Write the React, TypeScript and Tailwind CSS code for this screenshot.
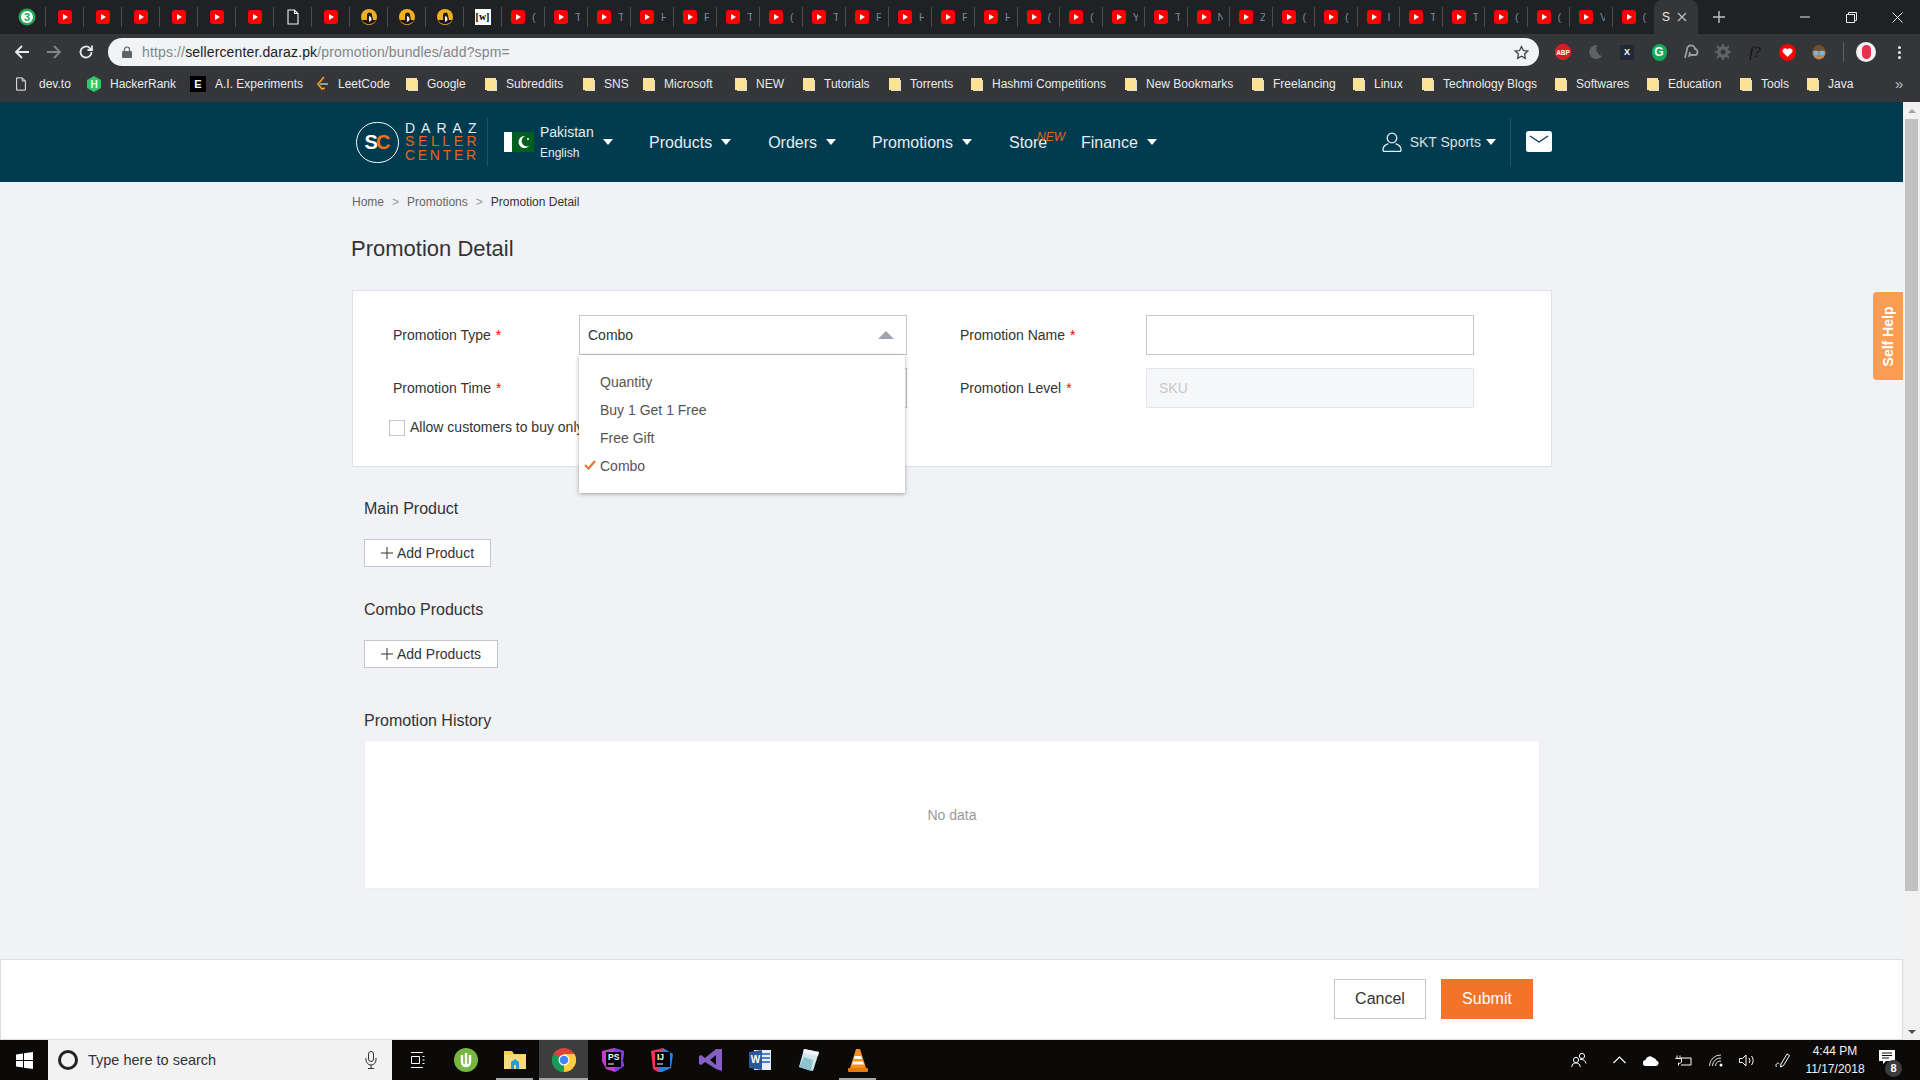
import React from 'react';

const Yt = () => (
  <svg width="14" height="14" viewBox="0 0 14 14" className="shrink-0">
    <rect width="14" height="14" rx="3" fill="#f00" />
    <path d="M5 4l5 3-5 3z" fill="#fff" />
  </svg>
);

const Doc = ({ size = 14 }: { size?: number }) => (
  <svg width={size} height={size + 2} viewBox="0 0 12 16" fill="none" stroke="#f1f3f4" strokeWidth="1.1" className="shrink-0">
    <path d="M1 1h6.5L11 4.5V15H1z" />
    <path d="M7.5 1v3.5H11" />
  </svg>
);

const Bird = () => (
  <svg width="16" height="16" viewBox="0 0 16 16" className="shrink-0">
    <circle cx="8" cy="8" r="8" fill="#f2b01e" />
    <path d="M1 11h14a8 8 0 0 1-14 0z" fill="#111" />
    <path d="M6 14V6a2.5 2.5 0 0 1 5 0l1 5-2 3z" fill="#222" />
    <path d="M8 13V7l2 1 .6 3z" fill="#fff" />
  </svg>
);

const Whats = () => (
  <svg width="18" height="20" viewBox="0 0 18 20" className="shrink-0">
    <circle cx="9" cy="10" r="8.5" fill="#1fa855" />
    <circle cx="9" cy="10" r="6" fill="#fff" />
    <text x="9" y="14" textAnchor="middle" fontSize="11" fontWeight="700" fill="#1fa855" fontFamily="Liberation Sans, sans-serif">3</text>
  </svg>
);

const W = () => (
  <div className="w-[16px] h-[16px] bg-white shrink-0 flex items-center justify-center text-[10px] leading-none text-black font-bold font-['Liberation_Serif',serif]">[w]</div>
);

const firstTabs: React.ReactNode[] = [<Whats />, <Yt />, <Yt />, <Yt />, <Yt />, <Yt />, <Yt />, <Doc />, <Yt />, <Bird />, <Bird />, <Bird />, <W />];
const lettersA = ['(', 'T', 'T', 'H', 'F', 'T', '(', 'T', 'F', 'H', 'F'];
const lettersB = ['H', '(', '(', 'Y', 'T', 'N', 'Z', '(', '(', 'I', 'T', 'T', '(', '(', 'V', '('];

const LetterTab = ({ letter, wide }: { letter: string; wide?: boolean }) => (
  <div className={`${wide ? 'w-[43px]' : 'w-[42.5px]'} h-[20px] shrink-0 pl-[9px] flex items-center gap-[7px] border-r border-[#4a4c50] overflow-hidden`}>
    <Yt />
    <span className="text-[11px] text-[#6f8a9c] w-[5px] overflow-hidden">{letter}</span>
  </div>
);

const TabStrip = () => (
  <div className="h-[34px] bg-[#202124] flex items-center pl-[8px] shrink-0">
    {firstTabs.map((icon, i) => (
      <div key={i} className="w-[38px] h-[20px] shrink-0 flex items-center justify-center border-r border-[#4a4c50]">
        {icon}
      </div>
    ))}
    {lettersA.map((l, i) => (
      <LetterTab key={i} letter={l} wide />
    ))}
    {lettersB.map((l, i) => (
      <LetterTab key={i} letter={l} />
    ))}
    <div className="w-[44px] h-[34px] shrink-0 -ml-px bg-[#35363a] rounded-t-[8px] flex items-center pl-[8px] text-[12px] text-[#e8eaed]">
      <span>S</span>
      <svg width="10" height="10" viewBox="0 0 10 10" className="ml-[7px]" stroke="#bdc1c6" strokeWidth="1.2">
        <path d="M1 1l8 8M9 1l-8 8" />
      </svg>
    </div>
    <svg width="14" height="14" viewBox="0 0 14 14" className="ml-[14px]" stroke="#bdc1c6" strokeWidth="1.4">
      <path d="M7 1v12M1 7h12" />
    </svg>
    <div className="ml-auto flex text-white">
      <div className="w-[46px] h-[34px] flex items-center justify-center">
        <svg width="10" height="10" viewBox="0 0 10 10" stroke="#e8eaed"><path d="M0 5h10" /></svg>
      </div>
      <div className="w-[46px] h-[34px] flex items-center justify-center">
        <svg width="11" height="11" viewBox="0 0 11 11" fill="none" stroke="#e8eaed"><path d="M.5 2.5h8v8h-8zM2.5 2.5v-2h8v8h-2" /></svg>
      </div>
      <div className="w-[46px] h-[34px] flex items-center justify-center">
        <svg width="11" height="11" viewBox="0 0 11 11" stroke="#e8eaed"><path d="M.5.5l10 10M10.5.5l-10 10" /></svg>
      </div>
    </div>
  </div>
);

const ToolIcon = ({ children }: { children: React.ReactNode }) => (
  <div className="w-[32px] h-[28px] flex items-center justify-center shrink-0">{children}</div>
);

const extIcons: React.ReactNode[] = [
  <svg width="16" height="16" viewBox="0 0 16 16"><path d="M5 0h6l5 5v6l-5 5H5l-5-5V5z" fill="#d21f26" /><text x="8" y="10.5" textAnchor="middle" fontSize="6.5" fontWeight="700" fill="#fff" fontFamily="Liberation Sans, sans-serif">ABP</text></svg>,
  <svg width="16" height="16" viewBox="0 0 16 16"><path d="M10 1a7 7 0 1 0 5 11A8 8 0 0 1 10 1z" fill="#5f6368" /></svg>,
  <div className="w-[14px] h-[15px] bg-[#1f2a36] text-[9px] leading-[15px] text-center text-white font-bold">X</div>,
  <div className="w-[15px] h-[17px] rounded-full bg-[#14a85a] text-[12px] leading-[17px] text-center font-bold"><span className="text-white">G</span></div>,
  <svg width="16" height="16" viewBox="0 0 16 16" fill="none" stroke="#9aa0a6" strokeWidth="1.8"><path d="M2 14l2-8a4 4 0 0 1 8-1 3 3 0 0 1-1 6H7M7 8l-1 5" /></svg>,
  <svg width="16" height="16" viewBox="0 0 16 16"><circle cx="8" cy="8" r="6" fill="#5f6368" /><circle cx="8" cy="8" r="2.5" fill="#35363a" /><path d="M8 0v3M8 13v3M0 8h3M13 8h3M2 2l2 2M12 12l2 2M14 2l-2 2M4 12l-2 2" stroke="#5f6368" strokeWidth="2" /></svg>,
  <span className="text-[15px] italic text-[#111] font-['Liberation_Serif',serif]">f?</span>,
  <svg width="17" height="17" viewBox="0 0 17 17"><circle cx="8.5" cy="8.5" r="8.5" fill="#f00" /><path d="M8.5 13L4 8.5a2.5 2.5 0 0 1 4.5-3 2.5 2.5 0 0 1 4.5 3z" fill="#fff" /></svg>,
  <svg width="16" height="17" viewBox="0 0 16 17"><circle cx="8" cy="9" r="6.5" fill="#b98552" /><path d="M2 7a6 6 0 0 1 12 0z" fill="#7a4f28" /><circle cx="5" cy="9" r="2.4" fill="#6fb8e8" /><circle cx="11" cy="9" r="2.4" fill="#6fb8e8" /></svg>,
];

const ToolBar = () => (
  <div className="h-[32px] bg-[#35363a] flex items-start pt-[4px] pl-[6px] shrink-0">
    <ToolIcon>
      <svg width="16" height="16" viewBox="0 0 16 16" fill="none" stroke="#e8eaed" strokeWidth="1.8"><path d="M15 8H2M8 2L2 8l6 6" /></svg>
    </ToolIcon>
    <ToolIcon>
      <svg width="16" height="16" viewBox="0 0 16 16" fill="none" stroke="#80868b" strokeWidth="1.8"><path d="M1 8h13M8 2l6 6-6 6" /></svg>
    </ToolIcon>
    <ToolIcon>
      <svg width="16" height="16" viewBox="0 0 16 16" fill="none" stroke="#e8eaed" strokeWidth="1.8"><path d="M13.5 8a5.5 5.5 0 1 1-1.6-3.9L14 6M14 1.5V6H9.5" /></svg>
    </ToolIcon>
    <div className="ml-[6px] w-[1431px] h-[28px] rounded-full bg-[#f1f3f4] flex items-center pl-[14px] pr-[10px] shrink-0">
      <svg width="10" height="12" viewBox="0 0 10 12" className="shrink-0">
        <path d="M2.5 5V3.5a2.5 2.5 0 0 1 5 0V5" fill="none" stroke="#5f6368" strokeWidth="1.2" />
        <rect y="5" width="10" height="7" rx="1" fill="#5f6368" />
      </svg>
      <span className="ml-[10px] text-[14px] whitespace-nowrap text-[#80868b] tracking-[0.14px]">
        https://<span className="text-[#202124]">sellercenter.daraz.pk</span>/promotion/bundles/add?spm=
      </span>
      <svg width="15" height="15" viewBox="0 0 24 24" fill="none" stroke="#3c4043" strokeWidth="2" className="ml-auto">
        <path d="M12 2.5l3 6.3 6.9.9-5 4.8 1.2 6.9-6.1-3.3-6.1 3.3 1.2-6.9-5-4.8 6.9-.9z" />
      </svg>
    </div>
    <div className="ml-[8px] flex">
      {extIcons.map((icon, i) => (
        <ToolIcon key={i}>{icon}</ToolIcon>
      ))}
    </div>
    <div className="ml-[8px] mt-[4px] w-px h-[20px] bg-[#5f6368]" />
    <div className="ml-[6px] w-[32px] h-[28px] flex items-center justify-center shrink-0">
      <div className="w-[20px] h-[20px] rounded-full bg-[#f1f3f4] flex items-center justify-center">
        <div className="w-[9px] h-[14px] rounded-full bg-[#e8304f]" />
      </div>
    </div>
    <div className="ml-px w-[32px] h-[28px] flex flex-col items-center justify-center gap-[2px]">
      <i className="w-[3px] h-[3px] rounded-full bg-[#e8eaed]" />
      <i className="w-[3px] h-[3px] rounded-full bg-[#e8eaed]" />
      <i className="w-[3px] h-[3px] rounded-full bg-[#e8eaed]" />
    </div>
  </div>
);

const Folder = () => (
  <svg width="12" height="13" viewBox="0 0 12 13" className="shrink-0">
    <path d="M0 0h11v12H0z" fill="#fde293" />
    <path d="M11 2h1v11H2v-1h9z" fill="#dadce0" />
  </svg>
);

const bookmarks: { label: string; cls: string; icon?: React.ReactNode }[] = [
  { label: 'HackerRank', cls: 'w-[103px]', icon: <svg width="14" height="16" viewBox="0 0 14 16" className="shrink-0"><path d="M7 0l7 4v8l-7 4-7-4V4z" fill="#2ec866" /><text x="7" y="12" textAnchor="middle" fontSize="10" fontWeight="700" fill="#fff" fontFamily="Liberation Sans, sans-serif">H</text></svg> },
  { label: 'A.I. Experiments', cls: 'w-[125px]', icon: <div className="w-[16px] h-[16px] bg-black text-white text-[11px] leading-[16px] text-center font-bold shrink-0">E</div> },
  { label: 'LeetCode', cls: 'w-[91px]', icon: <svg width="14" height="16" viewBox="0 0 14 16" fill="none" className="shrink-0"><path d="M9 1L3 8l4 5 3-1" stroke="#f89f1b" strokeWidth="1.6" /><path d="M5 8h8" stroke="#b3b3b3" strokeWidth="1.6" /></svg> },
  { label: 'Google', cls: 'w-[79px]' },
  { label: 'Subreddits', cls: 'w-[98px]' },
  { label: 'SNS', cls: 'w-[60px]' },
  { label: 'Microsoft', cls: 'w-[92px]' },
  { label: 'NEW', cls: 'w-[68px]' },
  { label: 'Tutorials', cls: 'w-[86px]' },
  { label: 'Torrents', cls: 'w-[82px]' },
  { label: 'Hashmi Competitions', cls: 'w-[154px]' },
  { label: 'New Bookmarks', cls: 'w-[127px]' },
  { label: 'Freelancing', cls: 'w-[101px]' },
  { label: 'Linux', cls: 'w-[69px]' },
  { label: 'Technology Blogs', cls: 'w-[133px]' },
  { label: 'Softwares', cls: 'w-[92px]' },
  { label: 'Education', cls: 'w-[93px]' },
  { label: 'Tools', cls: 'w-[67px]' },
  { label: 'Java', cls: 'w-[66px]' },
];

const BookmarkBar = () => (
  <div className="h-[36px] bg-[#35363a] flex items-center pl-[15px] shrink-0 text-[12px] text-[#e8eaed] font-['Liberation_Sans',sans-serif]">
    <div className="w-[72px] flex items-center gap-[12px] shrink-0">
      <Doc size={12} />
      <span>dev.to</span>
    </div>
    {bookmarks.map((b) => (
      <div key={b.label} className={`${b.cls} flex items-center gap-[9px] shrink-0 overflow-hidden whitespace-nowrap`}>
        {b.icon ?? <Folder />}
        <span>{b.label}</span>
      </div>
    ))}
    <span className="ml-[22px] text-[15px] text-[#bdc1c6]">»</span>
  </div>
);

const Caret = ({ className = 'border-t-white' }: { className?: string }) => (
  <i className={`inline-block w-0 h-0 border-x-[5px] border-x-transparent border-t-[6px] ${className}`} />
);

const NavItem = ({ label }: { label: string }) => (
  <div className="flex items-center gap-[9px] text-[16px] text-[#e5edf0]">
    <span className="mt-[1px]">{label}</span>
    <Caret />
  </div>
);

const TopNav = () => (
  <div className="h-[80px] bg-[#003b4f] flex items-center pl-[356px] pr-[351px] shrink-0">
    <div className="w-[120px] flex items-center shrink-0">
      <div className="w-[43px] h-[41px] rounded-full border-[1.5px] border-white flex items-center justify-center text-[20px] font-bold leading-none shrink-0">
        <span className="text-white">S</span>
        <span className="text-[#f0701f] -ml-[2px]">C</span>
      </div>
      <div className="ml-[6px] flex flex-col text-[14px] leading-[13.5px] whitespace-nowrap">
        <span className="text-[#e5edf0] tracking-[6px]">DARAZ</span>
        <span className="text-[#e8651a] tracking-[3.6px]">SELLER</span>
        <span className="text-[#e8651a] tracking-[2.7px]">CENTER</span>
      </div>
    </div>
    <div className="ml-[11px] w-px h-[48px] bg-[#1f5567]" />
    <svg width="30" height="20" viewBox="0 0 30 20" className="ml-[16px] shrink-0">
      <rect width="30" height="20" fill="#01601f" />
      <rect width="8" height="20" fill="#fff" />
      <path d="M21 4a6 6 0 1 0 4 10 5 5 0 1 1-4-10z" fill="#fff" />
      <circle cx="24" cy="7" r="1" fill="#fff" />
    </svg>
    <div className="ml-[6px] w-[63px] flex flex-col shrink-0 text-[#e5edf0]">
      <span className="text-[14px] leading-[21px]">Pakistan</span>
      <span className="text-[12px] leading-[20px]">English</span>
    </div>
    <Caret />
    <div className="ml-[36px] flex items-center gap-[36px]">
      <NavItem label="Products" />
      <div className="ml-[1px]"><NavItem label="Orders" /></div>
      <NavItem label="Promotions" />
      <div className="relative mt-[1px] ml-[1px] text-[16px] text-[#e5edf0] w-[36px]">
        Store
        <span className="absolute left-[28px] top-0 text-[12px] italic text-[#e8651a] leading-none">NEW</span>
      </div>
      <NavItem label="Finance" />
    </div>
    <div className="ml-auto flex items-center">
      <svg width="20" height="20" viewBox="0 0 20 20" fill="none" stroke="#e5edf0" strokeWidth="1.3" className="-ml-[1px]">
        <circle cx="10" cy="6" r="4.8" />
        <path d="M1 19.3v-1.6c0-3 3-5.2 5.5-6M19 19.3v-1.6c0-3-3-5.2-5.5-6M1 19.4h18" />
      </svg>
      <span className="ml-[8px] text-[14px] text-[#d6e0e4]">SKT Sports</span>
      <span className="ml-[5px] flex">
        <Caret />
      </span>
      <div className="ml-[14px] w-px h-[48px] bg-[#1f5567]" />
      <svg width="26" height="21" viewBox="0 0 26 21" className="ml-[15px] -mt-[1px]">
        <rect width="26" height="21" rx="2.5" fill="#fff" />
        <path d="M4 5l9 6 9-6" fill="none" stroke="#003b4f" strokeWidth="1.3" />
      </svg>
    </div>
  </div>
);

const Star = () => <span className="text-[#ff0000] ml-[5px]">*</span>;

const FormCard = () => (
  <div className="h-[177px] bg-white border border-[#dfe1e8] pt-[24px] text-[14px] text-[#333]">
    <div className="flex items-center pl-[40px]">
      <div className="w-[186px] shrink-0">Promotion Type<Star /></div>
      <div className="w-[328px] h-[40px] border border-[#c4c6cf] flex items-center px-[8px] shrink-0">
        Combo
        <i className="ml-auto mr-[4px] w-0 h-0 border-x-[8px] border-x-transparent border-b-[8px] border-b-[#a0a3b0]" />
      </div>
      <div className="ml-[53px] w-[186px] shrink-0">Promotion Name<Star /></div>
      <div className="w-[328px] h-[40px] border border-[#c4c6cf] shrink-0" />
    </div>
    <div className="mt-[13px] flex items-center pl-[40px]">
      <div className="w-[186px] shrink-0">Promotion Time<Star /></div>
      <div className="w-[328px] h-[40px] border border-[#c4c6cf] shrink-0" />
      <div className="ml-[53px] w-[186px] shrink-0">Promotion Level<Star /></div>
      <div className="w-[328px] h-[40px] border border-[#e3e5ea] bg-[#f6f7f9] flex items-center px-[12px] text-[#c8c8c8] shrink-0">SKU</div>
    </div>
    <div className="mt-[9px] ml-[36px] w-[190px] overflow-hidden flex items-center gap-[5px] whitespace-nowrap">
      <div className="w-[16px] h-[16px] border border-[#c4c6cf] bg-white shrink-0" />
      <span>Allow customers to buy only once</span>
    </div>
  </div>
);

const TypeMenu = () => (
  <div className="absolute left-[227px] top-[65px] w-[326px] h-[138px] bg-white shadow-[0_1px_4px_rgba(0,0,0,0.35)] py-[13px] text-[14px] text-[#555]">
    {['Quantity', 'Buy 1 Get 1 Free', 'Free Gift', 'Combo'].map((item) => (
      <div key={item} className="relative h-[28px] leading-[28px] pl-[21px]">
        {item === 'Combo' && (
          <svg width="12" height="10" viewBox="0 0 12 10" fill="none" stroke="#f37329" strokeWidth="2.2" className="absolute left-[5px] top-[8px]">
            <path d="M1 5l3.5 3.5L11 1" />
          </svg>
        )}
        {item}
      </div>
    ))}
  </div>
);

const AddButton = ({ label, cls }: { label: string; cls: string }) => (
  <div className={`${cls} h-[28px] bg-white border border-[#c4c6cf] flex items-center pl-[16px] gap-[4px] text-[14px] text-[#333]`}>
    <svg width="12" height="12" viewBox="0 0 12 12" stroke="#333" strokeWidth="1"><path d="M6 0v12M0 6h12" /></svg>
    {label}
  </div>
);

const Content = () => (
  <div className="relative flex-1 bg-[#f0f2f6] pl-[352px] pt-[12px] overflow-hidden">
    <div className="w-[1200px] relative">
      <div className="h-[16px] flex items-center text-[12px] text-[#666]">
        <span>Home</span>
        <span className="ml-[8px] text-[#999]">&gt;</span>
        <span className="ml-[8px]">Promotions</span>
        <span className="ml-[8px] text-[#999]">&gt;</span>
        <span className="ml-[8px] text-[#333]">Promotion Detail</span>
      </div>
      <h1 className="mt-[26px] -ml-[1px] text-[22px] leading-[26px] font-normal text-[#333]">Promotion Detail</h1>
      <div className="relative mt-[28px]">
        <FormCard />
        <TypeMenu />
      </div>
      <div className="pl-[12px] text-[16px] leading-[20px] text-[#333]">
        <div className="mt-[32px]">Main Product</div>
        <AddButton label="Add Product" cls="mt-[20px] w-[127px]" />
        <div className="mt-[33px]">Combo Products</div>
        <AddButton label="Add Products" cls="mt-[20px] w-[134px]" />
        <div className="mt-[43px]">Promotion History</div>
        <div className="mt-[9px] w-[1176px] h-[149px] bg-white border border-[#eceef2] flex items-center justify-center text-[14px] text-[#999]">
          No data
        </div>
      </div>
    </div>
    <div className="absolute right-0 top-[110px] w-[30px] h-[88px] pl-[2px] bg-[#fb9d52] rounded-l-[4px] flex items-center justify-center">
      <span className="-rotate-90 whitespace-nowrap text-[14px] font-bold text-white">Self Help</span>
    </div>
  </div>
);

const Footer = () => (
  <div className="h-[81px] bg-white border border-[#dadde5] pb-[2px] flex items-center justify-end pr-[369px] gap-[15px] shrink-0 text-[16px]">
    <div className="w-[92px] h-[40px] border border-[#c4c6cf] flex items-center justify-center text-[#333]">Cancel</div>
    <div className="w-[92px] h-[40px] bg-[#f37329] flex items-center justify-center text-white">Submit</div>
  </div>
);

const ScrollBar = () => (
  <div className="w-[17px] bg-[#f1f1f1] flex flex-col items-center shrink-0">
    <div className="h-[17px] flex items-center justify-center shrink-0">
      <i className="w-0 h-0 border-x-[4px] border-x-transparent border-b-[4px] border-b-[#a3a3a3]" />
    </div>
    <div className="w-[13px] h-[772px] bg-[#c1c1c1] shrink-0" />
    <div className="mt-auto h-[17px] flex items-center justify-center shrink-0">
      <i className="w-0 h-0 border-x-[4px] border-x-transparent border-t-[4px] border-t-[#505050]" />
    </div>
  </div>
);

const Task = ({ children, cls = '' }: { children: React.ReactNode; cls?: string }) => (
  <div className={`w-[49px] h-[40px] flex items-center justify-center shrink-0 relative ${cls}`}>{children}</div>
);

const Running = () => <div className="absolute bottom-0 left-[6px] right-[6px] h-[2px] bg-[#a8a8a8]" />;

const TaskBar = () => (
  <div className="h-[40px] bg-[#0c0a09] flex items-center shrink-0 font-['Liberation_Sans',sans-serif]">
    <div className="w-[48px] flex items-center justify-center shrink-0">
      <svg width="17" height="17" viewBox="0 0 17 17" fill="#fff"><path d="M0 2.4l7-1v6.6H0zM8 1.200L17 0v8H8zM0 9h7v6.600l-7-1zM8 9h9v8l-9-1.200z" /></svg>
    </div>
    <div className="w-[344px] h-[40px] bg-[#f2f2f2] flex items-center pl-[10px] pr-[15px] shrink-0">
      <div className="w-[20px] h-[20px] rounded-full border-[3px] border-[#222]" />
      <span className="ml-[10px] mt-[2px] text-[14.5px] text-[#333]">Type here to search</span>
      <svg width="12" height="18" viewBox="0 0 12 18" fill="none" stroke="#333" className="ml-auto">
        <rect x="3.5" y=".5" width="5" height="10" rx="2.5" />
        <path d="M1 7v2a5 5 0 0 0 10 0V7M6 14v3M3 17.5h6" />
      </svg>
    </div>
    <Task>
      <svg width="16" height="16" viewBox="0 0 16 16" fill="none" stroke="#fff"><path d="M2 .5h12M2 15.500h12M2.500 4.500h8v7h-8zM13.500 4.500h2M13.500 11.500h2M13.500 8h2" /></svg>
    </Task>
    <Task>
      <svg width="24" height="24" viewBox="0 0 24 24"><circle cx="12" cy="12" r="12" fill="#76b83f" /><path d="M8 7v7a4 4 0 0 0 8 0V7M12 5v12" fill="none" stroke="#fff" strokeWidth="2.4" /></svg>
    </Task>
    <Task>
      <svg width="22" height="22" viewBox="0 0 22 22"><path d="M0 2h8l2 3h12v15H0z" fill="#f6cd5b" /><path d="M0 6h22v14H0z" fill="#fbdc7c" /><path d="M7 20v-7l4-3 4 3v7z" fill="#2a9bd8" /><path d="M10 20v-4h2v4z" fill="#fbdc7c" /></svg>
      <Running />
    </Task>
    <Task cls="bg-[#3d3d3d]">
      <svg width="24" height="24" viewBox="0 0 24 24">
        <circle cx="12" cy="12" r="12" fill="#db4437" />
        <path d="M12 12L1.600 18A12 12 0 0 1 1.600 6z" fill="#0f9d58" />
        <path d="M12 12L1.600 18A12 12 0 0 0 12 24z" fill="#0f9d58" />
        <path d="M12 12l-0 12A12 12 0 0 0 22.400 6H12z" fill="#ffcd40" />
        <circle cx="12" cy="12" r="5.500" fill="#fff" />
        <circle cx="12" cy="12" r="4.300" fill="#4285f4" />
      </svg>
      <div className="absolute bottom-0 left-0 right-0 h-[2px] bg-[#a8a8a8]" />
    </Task>
    <Task>
      <svg width="24" height="24" viewBox="0 0 24 24"><path d="M1 3l12-3 10 3-1 10 1 5-9 6-9-3-4-8z" fill="#c23fc9" /><path d="M13 0l10 3-1 10 1 5-9 6z" fill="#7a3fe0" /><rect x="5" y="4" width="15" height="15" fill="#000" /><text x="7" y="12" fontSize="8.500" fontWeight="700" fill="#fff" fontFamily="Liberation Sans, sans-serif">PS</text><path d="M7 16h6" stroke="#fff" /></svg>
    </Task>
    <Task>
      <svg width="24" height="24" viewBox="0 0 24 24"><path d="M1 3l12-3 3 12-8 12-5-3z" fill="#f0345c" /><path d="M13 0l10 6-2 14-9 4-4 0z" fill="#2f7fe0" /><rect x="5" y="4" width="15" height="15" fill="#000" /><text x="7" y="12" fontSize="8.500" fontWeight="700" fill="#fff" fontFamily="Liberation Sans, sans-serif">IJ</text><path d="M7 16h6" stroke="#fff" /></svg>
    </Task>
    <Task>
      <svg width="24" height="24" viewBox="0 0 24 24"><path d="M23 1v22l-6-2-11-7-4 3-2-1V8l2-1 4 3 11-9zM17 7l-6 5 6 5z" fill="#865fc5" fillRule="evenodd" /></svg>
    </Task>
    <Task>
      <svg width="24" height="24" viewBox="0 0 24 24"><path d="M6 2h17v20H6z" fill="#e8eef7" /><path d="M14 5h8v2h-8zM14 9h8v2h-8zM14 13h8v2h-8z" fill="#4a84d0" /><path d="M1 4l13-2v20L1 20z" fill="#2b579a" /><text x="7.500" y="15" textAnchor="middle" fontSize="10" fontWeight="700" fill="#fff" fontFamily="Liberation Sans, sans-serif">W</text></svg>
    </Task>
    <Task>
      <svg width="22" height="24" viewBox="0 0 22 24"><path d="M6 1l15 3-6 19-14-4z" fill="#d4e7ec" /><path d="M1 19l5-10 9 3-2 11z" fill="#8cc4d2" /><path d="M6 1l15 3-1 4-15-3z" fill="#eef6f7" /></svg>
    </Task>
    <Task>
      <svg width="20" height="24" viewBox="0 0 20 24"><path d="M8 1h4l6 19H2z" fill="#f78f1e" /><path d="M6.700 8h6.600l1 3H5.700zM5 13.500h10l1 3H4z" fill="#fff" /><rect y="20" width="20" height="4" rx="1" fill="#e57a10" /></svg>
      <Running />
    </Task>
    <div className="ml-auto pr-[17px] flex items-center text-white">
      <div className="w-[32px] flex justify-center">
        <svg width="16" height="16" viewBox="0 0 16 16" fill="none" stroke="#fff"><circle cx="5" cy="8" r="2.600" /><circle cx="11" cy="4" r="2.600" /><path d="M.8 15c0-3 2-4 4.200-4s4.200 1 4.200 4M9 7.500c3-.5 5.500 1 6 4" /></svg>
      </div>
      <div className="ml-[8px] w-[32px] flex justify-center">
        <svg width="13" height="8" viewBox="0 0 13 8" fill="none" stroke="#fff" strokeWidth="1.1"><path d="M.5 7l6-6 6 6" /></svg>
      </div>
      <div className="w-[32px] flex justify-center">
        <svg width="16" height="11" viewBox="0 0 16 11" fill="#fff"><path d="M3 11a3 3 0 0 1-.5-6A4.500 4.500 0 0 1 10.500 3a3.500 3.500 0 0 1 3 2.500A2.800 2.800 0 0 1 13 11z" /></svg>
      </div>
      <div className="w-[32px] flex justify-center">
        <svg width="17" height="11" viewBox="0 0 17 11" fill="none" stroke="#fff"><path d="M6 3h10v7H6M2 .5v3M5 .5v3M.5 3.500h6V6a2 2 0 0 1-3 2v2.500" /></svg>
      </div>
      <div className="ml-px w-[32px] flex justify-center">
        <svg width="15" height="13" viewBox="0 0 15 13" fill="none" stroke="#ddd"><path d="M.5 12A11 11 0 0 1 12 1M3.500 12A8 8 0 0 1 12 4M6.500 12A5 5 0 0 1 12 7" /><circle cx="12" cy="11" r="1.500" fill="#fff" stroke="none" /></svg>
      </div>
      <div className="-ml-px w-[32px] flex justify-center">
        <svg width="16" height="13" viewBox="0 0 16 13" fill="none" stroke="#fff"><path d="M.5 4.500h3L7 1v11L3.500 8.500h-3zM10 4a4 4 0 0 1 0 5M12.500 2a7 7 0 0 1 0 9" /></svg>
      </div>
      <div className="ml-[4px] w-[32px] flex justify-center">
        <svg width="16" height="16" viewBox="0 0 16 16" fill="none" stroke="#fff"><path d="M6 12l6-10 2.500 1.500-6 10-3 1.500zM1.500 15c-2-3 2-5 3-3" /></svg>
      </div>
      <div className="w-[72px] flex flex-col items-center text-[12px] leading-[18px] text-[#f2f2f2]">
        <span>4:44 PM</span>
        <span>11/17/2018</span>
      </div>
      <div className="relative w-[32px] h-[40px] flex items-center justify-center">
        <svg width="16" height="14" viewBox="0 0 16 14" className="-mt-[6px]">
          <path d="M0 0h16v11H7l-3 3v-3H0z" fill="#fff" />
          <path d="M3 3h10M3 5.500h10M3 8h7" stroke="#0c0a09" />
        </svg>
        <span className="absolute left-[14px] top-[20px] w-[17px] h-[17px] rounded-full bg-[#3c3c3c] text-[11px] leading-[17px] text-center text-white font-bold">8</span>
      </div>
    </div>
  </div>
);

export default function App() {
  return (
    <div className="w-[1920px] h-[1080px] overflow-hidden flex flex-col font-['Liberation_Sans',Arial,sans-serif]">
      <TabStrip />
      <ToolBar />
      <BookmarkBar />
      <div className="h-[938px] flex shrink-0">
        <div className="flex-1 flex flex-col min-w-0">
          <TopNav />
          <Content />
          <Footer />
        </div>
        <ScrollBar />
      </div>
      <TaskBar />
    </div>
  );
}
